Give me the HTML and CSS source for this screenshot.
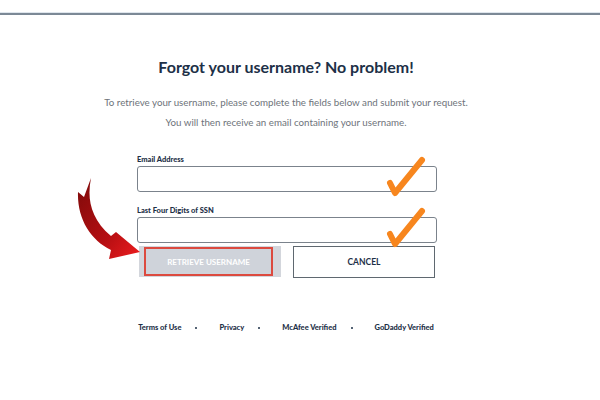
FILE: index.html
```html
<!DOCTYPE html>
<html lang="en">
<head>
  <meta charset="UTF-8">
  <title>Forgot Username</title>
  <link rel="stylesheet" href="styles.css">
</head>
<body>
  <div class="topbar"></div>

  <div class="page">
    <h1>Forgot your username? No problem!</h1>
    <p class="intro">To retrieve your username, please complete the fields below and submit your request.</p>
    <p class="intro">You will then receive an email containing your username.</p>

    <form class="form">
      <div class="field">
        <label for="email">Email Address</label>
        <div class="input-wrap">
          <input type="text" id="email">
          <svg class="check" width="40" height="42" viewBox="0 0 40 42">
            <path d="M4 28 L9 38 L36 5" fill="none" stroke="#f7861e" stroke-width="6" stroke-linecap="round" stroke-linejoin="round"/>
          </svg>
        </div>
      </div>
      <div class="field">
        <label for="ssn">Last Four Digits of SSN</label>
        <div class="input-wrap">
          <input type="text" id="ssn">
          <svg class="check" width="40" height="42" viewBox="0 0 40 42">
            <path d="M4 28 L9 38 L36 5" fill="none" stroke="#f7861e" stroke-width="6" stroke-linecap="round" stroke-linejoin="round"/>
          </svg>
        </div>
      </div>

      <div class="buttons">
        <div class="retrieve-wrap">
          <button type="button" class="retrieve">RETRIEVE USERNAME</button>
        </div>
        <button type="button" class="cancel">CANCEL</button>
      </div>

      <!-- red pointer arrow -->
      <svg class="arrow" width="100" height="100" viewBox="0 0 100 100">
        <defs>
          <linearGradient id="red" x1="0" y1="0" x2="1" y2="1">
            <stop offset="0" stop-color="#7d0a0a"/>
            <stop offset="0.6" stop-color="#b50f12"/>
            <stop offset="1" stop-color="#ee1c1f"/>
          </linearGradient>
        </defs>
        <path d="M31 12 C27 32 30 52 51 70 L56 66 L80 86 L49 93 L51 84 C30 74 17 52 18 26 L24 31 Z" fill="url(#red)"/>
      </svg>
    </form>

    <div class="footer">
      <a href="#">Terms of Use</a>
      <span class="dot"></span>
      <a href="#">Privacy</a>
      <span class="dot"></span>
      <a href="#">McAfee Verified</a>
      <span class="dot"></span>
      <a href="#">GoDaddy Verified</a>
    </div>
  </div>
</body>
</html>
```

FILE: styles.css
```css
body {
  margin: 0;
  padding: 0;
  background: #fff;
  font-family: 'Lato', 'Noto Sans', sans-serif;
  color: #1d3047;
}

.topbar {
  height: 13px;
  border-bottom: 2px solid #7c8996;
  box-shadow: 0 -1px 0 #dfe6ed inset;
}

.page {
  padding-right: 28px;
  display: flex;
  flex-direction: column;
  align-items: center;
}

h1 {
  margin: 42px 0 0 0;
  font-size: 16px;
  line-height: 20px;
  font-weight: 700;
  color: #1d3047;
}

.intro {
  margin: 0;
  font-size: 9.75px;
  line-height: 20px;
  color: #6e737a;
}

h1 + .intro {
  margin-top: 15px;
}

.form {
  position: relative;
  width: 300px;
  margin-top: 22px;
  padding-left: 2px;
}

.field label {
  display: block;
  font-size: 7.5px;
  font-weight: 900;
  line-height: 12px;
  color: #1d3047;
}

.field + .field {
  margin-top: 13px;
}

.input-wrap {
  position: relative;
}

input {
  display: block;
  box-sizing: border-box;
  width: 300px;
  height: 26px;
  border: 1px solid #7b838c;
  border-radius: 3px;
  background: #fff;
}

.check {
  position: absolute;
  left: 249px;
  top: -11px;
}

.buttons {
  display: flex;
  gap: 12px;
  margin-top: 3px;
  padding-left: 2px;
}

.retrieve-wrap {
  width: 142px;
  height: 31px;
  box-sizing: border-box;
  background: #d3d6dc;
  padding: 1px 8px 1px 5px;
}

.retrieve {
  width: 100%;
  height: 100%;
  border: 2px solid #dc4a3f;
  background: #cfd3da;
  color: #fff;
  font-family: inherit;
  font-size: 8px;
  font-weight: 700;
  padding: 0;
}

.cancel {
  width: 142px;
  height: 32px;
  border: 1px solid #5f6870;
  background: #fff;
  color: #1d3047;
  font-family: inherit;
  font-size: 8.5px;
  font-weight: 700;
  padding: 0;
}

.arrow {
  position: absolute;
  left: -75px;
  top: 12px;
}

.footer {
  display: flex;
  align-items: center;
  margin-top: 45px;
  font-size: 7.5px;
  font-weight: 900;
}

.footer a {
  color: #1d3047;
  text-decoration: none;
}

.dot {
  width: 2px;
  height: 2px;
  border-radius: 50%;
  background: #1d3047;
  margin: 0 22px 0 14px;
}
```
